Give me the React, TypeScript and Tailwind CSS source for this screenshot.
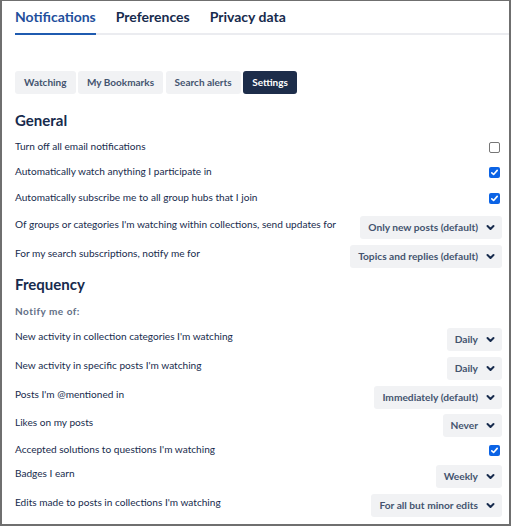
import { useState } from 'react';

type Row = {
  label: string;
  kind: 'check' | 'select';
  value?: string;
  checked?: boolean;
  space: string;
};

const GENERAL: readonly Row[] = [
  { label: 'Turn off all email notifications', kind: 'check', checked: false, space: 'mt-[9px]' },
  { label: 'Automatically watch anything I participate in', kind: 'check', checked: true, space: 'mt-[9px]' },
  {
    label: 'Automatically subscribe me to all group hubs that I join',
    kind: 'check',
    checked: true,
    space: 'mt-[10px]',
  },
  {
    label: "Of groups or categories I'm watching within collections, send updates for",
    kind: 'select',
    value: 'Only new posts (default)',
    space: 'mt-[10px]',
  },
  {
    label: 'For my search subscriptions, notify me for',
    kind: 'select',
    value: 'Topics and replies (default)',
    space: 'mt-[6px]',
  },
];

const FREQUENCY: readonly Row[] = [
  { label: "New activity in collection categories I'm watching", kind: 'select', value: 'Daily', space: 'mt-[11px]' },
  { label: "New activity in specific posts I'm watching", kind: 'select', value: 'Daily', space: 'mt-[6px]' },
  { label: "Posts I'm @mentioned in", kind: 'select', value: 'Immediately (default)', space: 'mt-[6px]' },
  { label: 'Likes on my posts', kind: 'select', value: 'Never', space: 'mt-[5px]' },
  { label: "Accepted solutions to questions I'm watching", kind: 'check', checked: true, space: 'mt-[5px]' },
  { label: 'Badges I earn', kind: 'select', value: 'Weekly', space: 'mt-[7px]' },
  {
    label: "Edits made to posts in collections I'm watching",
    kind: 'select',
    value: 'For all but minor edits',
    space: 'mt-[6px]',
  },
];

const SUB_TABS = ['Watching', 'My Bookmarks', 'Search alerts', 'Settings'];

function Chevron() {
  return (
    <svg width="9" height="9" viewBox="0 0 9 9" aria-hidden="true">
      <path d="M1.5 3 L4.5 6 L7.5 3" fill="none" stroke="#172b4d" strokeWidth="2" strokeLinecap="round" strokeLinejoin="round" />
    </svg>
  );
}

function CheckBox({ checked }: { checked: boolean }) {
  if (!checked) {
    return <span className="block h-[11px] w-[11px] rounded-[2px] border border-[#767676] bg-white" />;
  }
  return (
    <span className="flex h-[11px] w-[11px] items-center justify-center rounded-[2px] bg-[#0b63e5]">
      <svg width="9" height="9" viewBox="0 0 9 9" aria-hidden="true">
        <path d="M1.8 4.8 L3.6 6.5 L7.2 2.4" fill="none" stroke="white" strokeWidth="1.6" strokeLinecap="round" strokeLinejoin="round" />
      </svg>
    </span>
  );
}

function SettingRow({ row }: { row: Row }) {
  if (row.kind === 'check') {
    return (
      <div className={`flex h-[16px] items-center justify-between ${row.space}`}>
        <span className="whitespace-nowrap text-[10.1px] text-[#172b4d]">{row.label}</span>
        <div className="pr-[2px]">
          <CheckBox checked={!!row.checked} />
        </div>
      </div>
    );
  }
  return (
    <div className={`flex h-[23px] items-center justify-between ${row.space}`}>
      <span className="-mt-[5px] whitespace-nowrap text-[10.1px] text-[#172b4d]">{row.label}</span>
      <div className="flex h-[23px] items-center gap-[8px] whitespace-nowrap rounded-[3px] bg-[#f1f2f4] pl-[8px] pr-[7px] text-[10.2px] font-bold text-[#44546f]">
        {row.value}
        <Chevron />
      </div>
    </div>
  );
}

export default function App() {
  const [tab] = useState('Settings');

  return (
    <div
      className="h-[526px] w-[511px] overflow-hidden border-2 border-t border-[#6f6f6f] bg-white text-[#172b4d]"
      style={{ fontFamily: 'Lato, "Open Sans", sans-serif' }}
    >
      <div className="ml-[13px] flex gap-[20px] border-b-2 border-[#ebecf0]">
        {['Notifications', 'Preferences', 'Privacy data'].map((t, i) => (
          <div
            key={t}
            className={
              i === 0
                ? '-mb-[2px] border-b-2 border-[#1f5bb0] pt-[6px] pb-[6px] text-[14px] font-bold leading-[20px] text-[#1f4f9c]'
                : 'pt-[6px] pb-[6px] text-[14px] font-bold leading-[20px] text-[#172b4d]'
            }
          >
            {t}
          </div>
        ))}
      </div>

      <div className="pl-[13px] pr-[7px]">
        <div className="mt-[36px] flex gap-[2.5px]">
          {SUB_TABS.map((t) => (
            <div
              key={t}
              className={
                t === tab
                  ? 'flex h-[23px] items-center rounded-[3px] bg-[#1d2d4a] px-[9px] text-[10px] font-bold text-white'
                  : 'flex h-[23px] items-center rounded-[3px] bg-[#f1f2f4] px-[9px] text-[10px] font-bold text-[#44546f]'
              }
            >
              {t}
            </div>
          ))}
        </div>

        <h2 className="mt-[16px] text-[15px] font-bold leading-[20px]">General</h2>
        <div className="flex flex-col">
          {GENERAL.map((r) => (
            <SettingRow key={r.label} row={r} />
          ))}
        </div>

        <h2 className="mt-[6px] text-[15px] font-bold leading-[20px]">Frequency</h2>
        <div className="mt-[11px] text-[10px] font-bold leading-[12px] tracking-[0.5px] text-[#626f86]">
          Notify me of:
        </div>
        <div className="flex flex-col">
          {FREQUENCY.map((r) => (
            <SettingRow key={r.label} row={r} />
          ))}
        </div>
      </div>
    </div>
  );
}
